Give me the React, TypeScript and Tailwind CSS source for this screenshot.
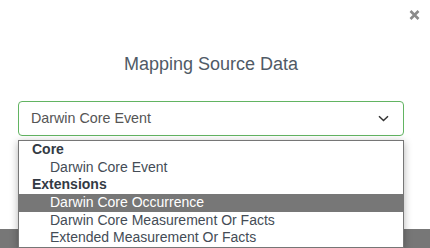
import React from "react";

const groups = [
  { label: "Core", items: ["Darwin Core Event"] },
  {
    label: "Extensions",
    items: [
      "Darwin Core Occurrence",
      "Darwin Core Measurement Or Facts",
      "Extended Measurement Or Facts",
    ],
  },
];

const App: React.FC = () => {
  const selected = "Darwin Core Event";
  const highlighted = "Darwin Core Occurrence";

  return (
    <div className="w-[430px] h-[248px] overflow-hidden bg-[#777777] font-['Liberation_Sans',Arial,sans-serif]">
      <div className="relative h-[229px] bg-white pr-[8px] flex flex-col items-center">
        {/* close button */}
        <button className="absolute right-[10px] top-[9px] w-[12px] h-[11px] flex items-center justify-center">
          <svg width="11" height="10" viewBox="0 0 11 10">
            <path
              d="M1.5 1 L9.5 9 M9.5 1 L1.5 9"
              stroke="#8a8a8a"
              strokeWidth="2.6"
              fill="none"
            />
          </svg>
        </button>

        <h2 className="mt-[54px] text-[18px] leading-[21px] text-[#505a66]">
          Mapping Source Data
        </h2>

        <div className="relative mt-[26px] w-[386px]">
          <div className="h-[35px] flex items-center justify-between border border-[#62b462] rounded-[4px] pl-[12px] pr-[14px]">
            <span className="text-[14.3px] text-[#555555]">{selected}</span>
            <svg width="11" height="7" viewBox="0 0 11 7">
              <path
                d="M1 1.2 L5.5 5.5 L10 1.2"
                stroke="#333333"
                strokeWidth="1.5"
                fill="none"
              />
            </svg>
          </div>

          {/* open dropdown */}
          <div className="absolute left-0 right-0 top-[39px] z-10 bg-white border border-[#767676] shadow-[0_2px_8px_rgba(0,0,0,0.3)] text-[14px]">
            {groups.map((group) => (
              <div key={group.label}>
                <div className="h-[17.7px] leading-[17.7px] pl-[13px] font-bold text-[#333a44]">
                  {group.label}
                </div>
                {group.items.map((item) => (
                  <div
                    key={item}
                    className={
                      item === highlighted
                        ? "h-[17.7px] leading-[17.7px] pl-[31px] bg-[#777777] text-white"
                        : "h-[17.7px] leading-[17.7px] pl-[31px] text-[#444c56]"
                    }
                  >
                    {item}
                  </div>
                ))}
              </div>
            ))}
          </div>
        </div>
      </div>
    </div>
  );
};

export default App;
